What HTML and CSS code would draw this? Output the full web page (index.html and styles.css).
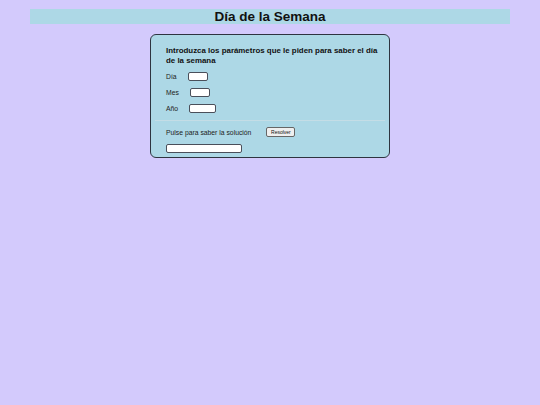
FILE: index.html
```html
<!DOCTYPE html>
<html lang="es">
<head>
<meta charset="utf-8">
<title>Día de la Semana</title>
<link rel="stylesheet" href="styles.css">
</head>
<body>
<h1 class="title">Día de la Semana</h1>
<form class="panel">
  <p class="intro">Introduzca los parámetros que le piden para saber el día de la semana</p>
  <div class="row"><label class="lbl">Día</label><input class="field field-sm" type="text"></div>
  <div class="row"><label class="lbl">Mes</label><input class="field field-sm" type="text"></div>
  <div class="row"><label class="lbl">Año</label><input class="field field-md" type="text"></div>
  <hr class="sep">
  <div class="row"><span class="lbl lbl-wide">Pulse para saber la solución</span><button class="btn" type="button">Resolver</button></div>
  <div class="row"><input class="field field-lg" type="text"></div>
</form>
</body>
</html>
```
FILE: styles.css
```css
html, body {
  margin: 0;
  padding: 0;
}
body {
  background: #d3cafc;
  font-family: "Liberation Sans", Arial, sans-serif;
  color: #111;
  min-height: 405px;
}
.title {
  margin: 9px 30px 0;
  height: 15px;
  line-height: 15px;
  background: #add8e6;
  font-size: 13.5px;
  font-weight: bold;
  text-align: center;
  color: #111;
}
.panel {
  width: 230px;
  margin: 10px auto 0;
  background: #add8e6;
  border: 1px solid #2e3440;
  border-radius: 6px;
  padding: 11px 4px 4px;
  box-sizing: content-box;
}
.intro {
  margin: 0 0 6px;
  padding: 0 2px 0 11px;
  font-size: 7.9px;
  line-height: 9.5px;
  font-weight: bold;
}
.row {
  display: flex;
  align-items: center;
  height: 10px;
  margin-bottom: 6px;
  padding: 0 11px;
  font-size: 6.8px;
  color: #222;
}
.row:last-child {
  margin-bottom: 0;
}
.lbl {
  margin-right: 11px;
}
.lbl-wide {
  margin-right: 15px;
}
.field {
  box-sizing: border-box;
  height: 9px;
  border: 1px solid #4a4f5a;
  border-radius: 2px;
  background: #fff;
  padding: 0;
  margin: 0;
}
.field-sm { width: 20px; }
.field-md { width: 27px; }
.field-lg { width: 76px; }
.sep {
  border: 0;
  border-top: 1px solid #c4dde6;
  margin: 7px 0 6px;
}
.btn {
  box-sizing: border-box;
  height: 10px;
  width: 29px;
  padding: 0;
  margin: 0;
  font-family: "Liberation Sans", Arial, sans-serif;
  font-size: 5px;
  line-height: 8px;
  background: #efefef;
  border: 1px solid #666;
  border-radius: 2px;
  color: #111;
}
```
